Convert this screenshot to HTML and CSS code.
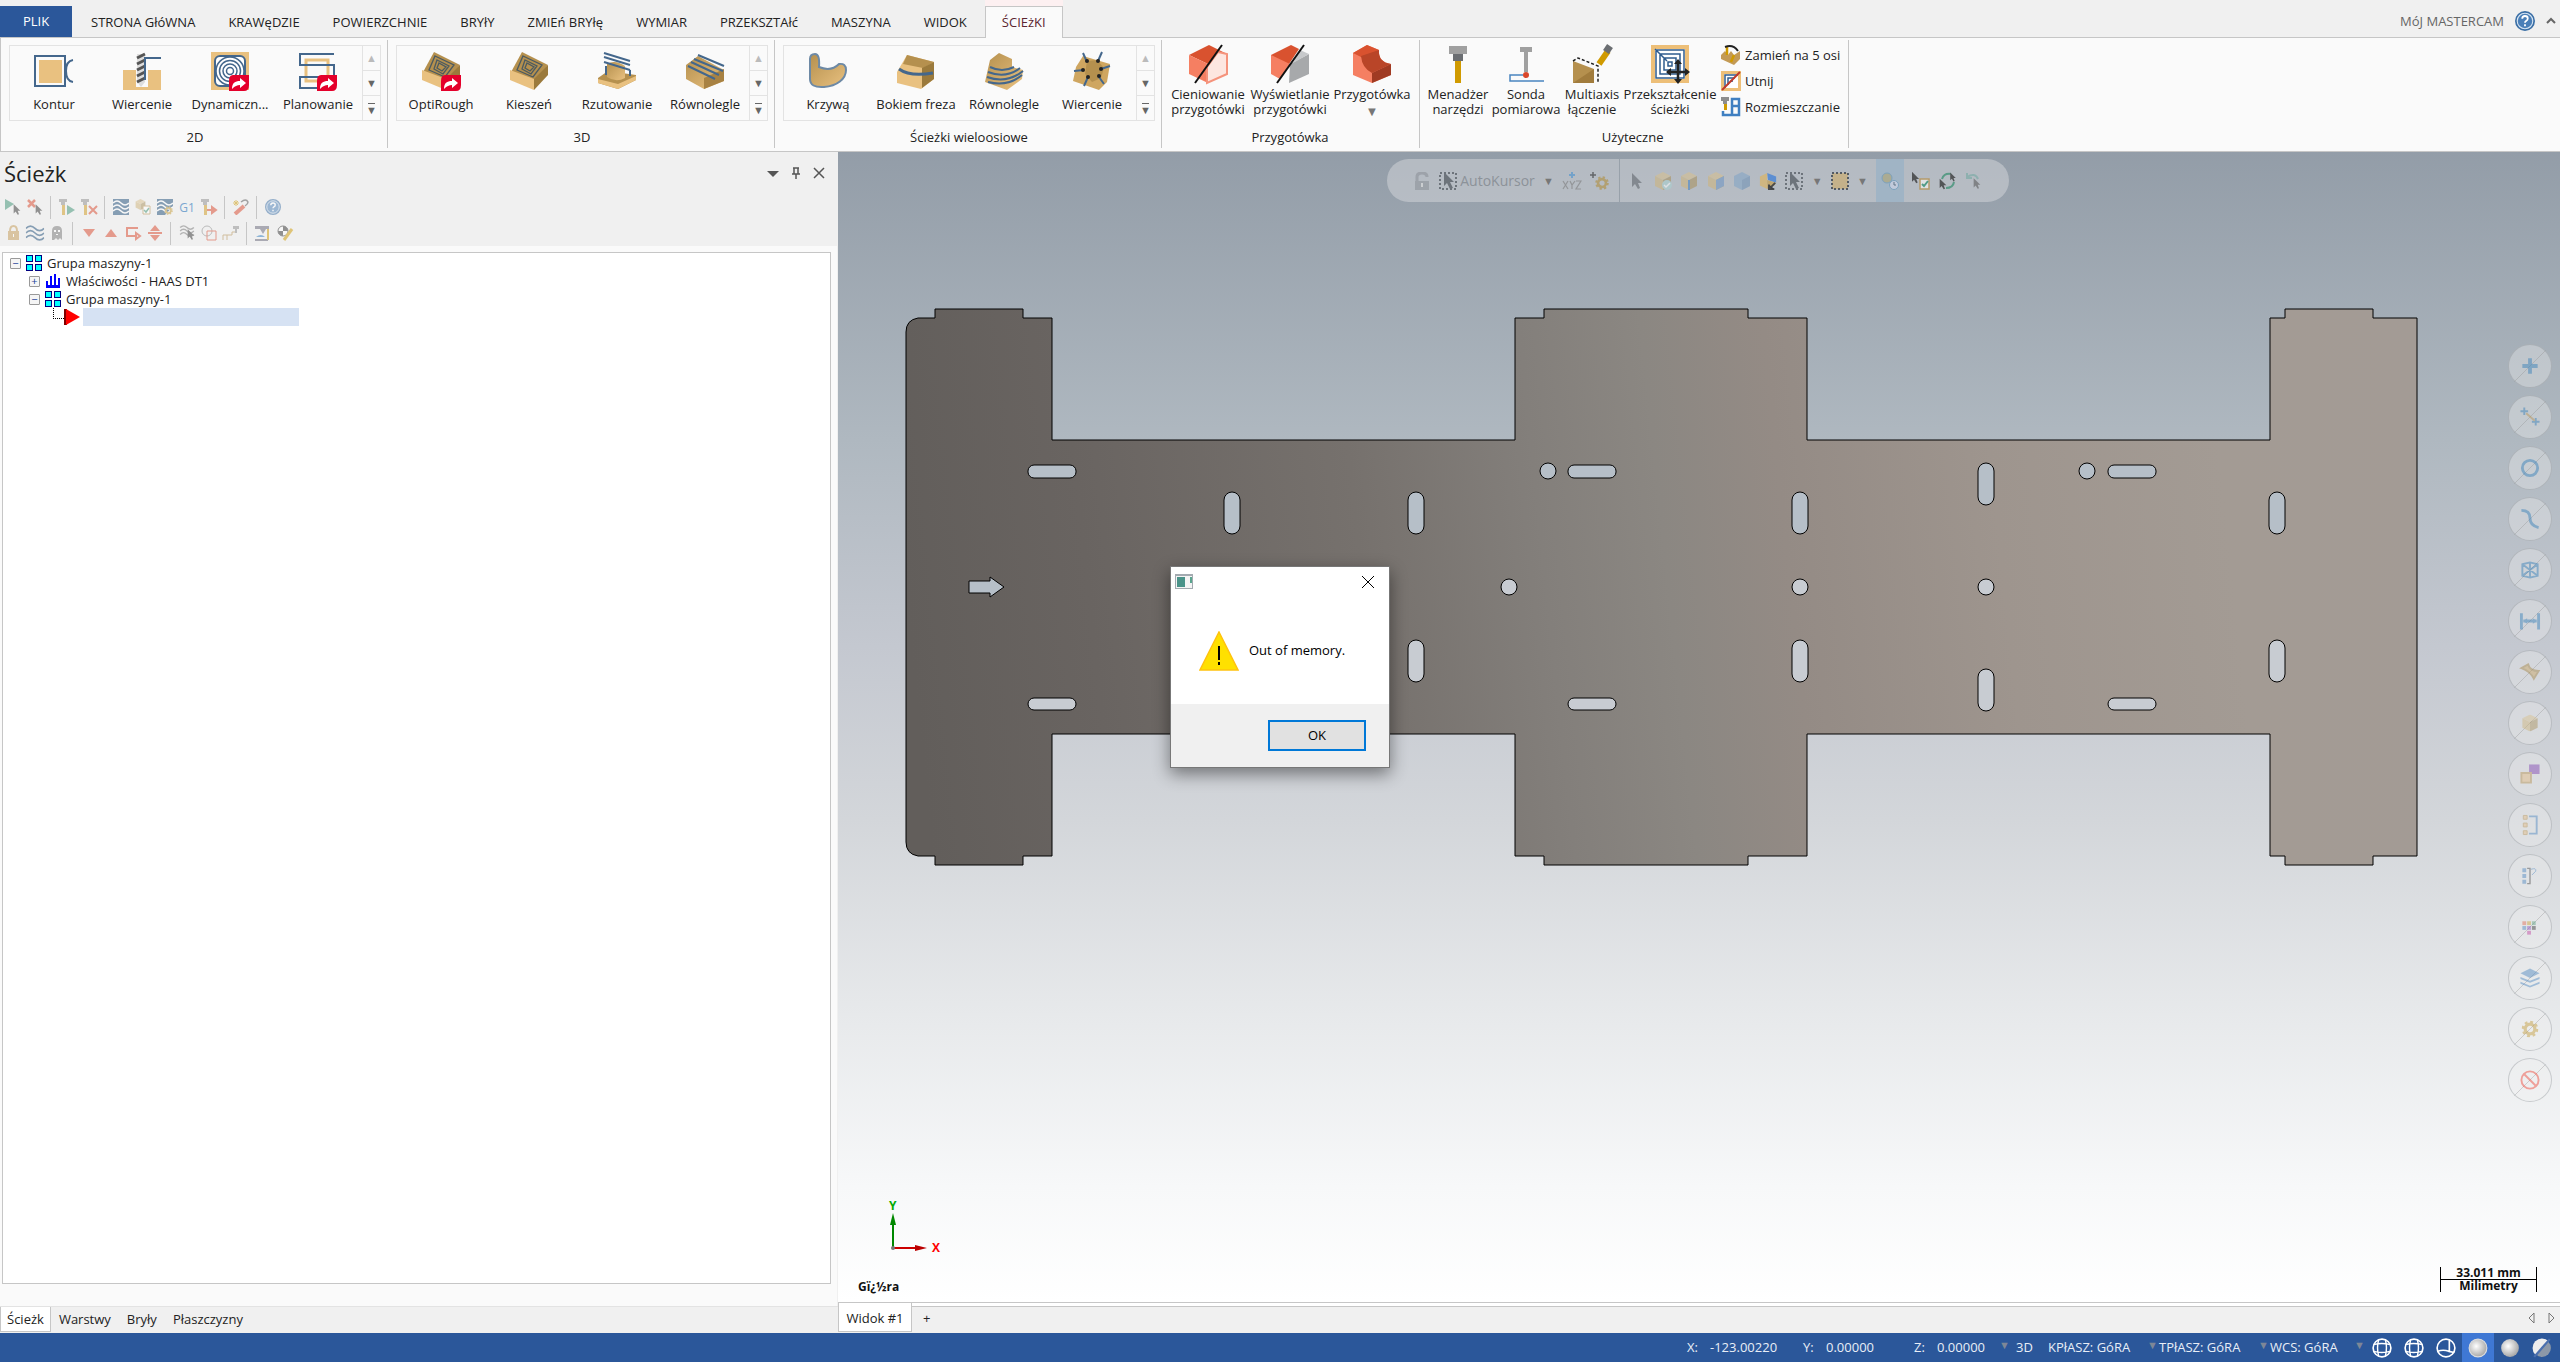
FILE: index.html
```html
<!DOCTYPE html>
<html lang="pl">
<head>
    <meta charset="UTF-8">
    <meta name="viewport" content="width=device-width, initial-scale=1.0">
    <title>Mastercam</title>
    <link rel="stylesheet" href="styles.css">
</head>
<body>
    <!-- Shared icon shapes -->
    <svg class="defs" aria-hidden="true">
        <defs>
            <linearGradient id="wood" x1="0" y1="0" x2="1" y2="1">
                <stop offset="0" stop-color="#b5904e"/><stop offset="1" stop-color="#e9c180"/>
            </linearGradient>
            <radialGradient id="ball" cx="0.4" cy="0.4" r="0.6">
                <stop offset="0" stop-color="#fff"/><stop offset="1" stop-color="#a9a9a9"/>
            </radialGradient>
        </defs>
        <symbol id="i-badge" viewBox="0 0 20 16">
            <path d="M4 0h16v10q0 6-5 6H0V6q0-6 4-6z" fill="#e4002b"/>
            <path d="M3 14C3 8 6 6 11 6V3l6 5-6 5v-3C8 10 6 11 3 14z" fill="#fff"/>
        </symbol>
        <symbol id="i-cursor" viewBox="0 0 12 18">
            <path d="M1 1v14l3-3 3 5 2-1-2-5h4z" fill="currentColor"/>
        </symbol>
        <symbol id="i-group" viewBox="0 0 16 16">
            <path d="M0 0h16v16H0z" fill="#000080"/><path d="M7 0h2v16H7zM0 7h16v2H0z" fill="#fff"/>
            <path d="M1 1h5v5H1zM10 1h5v5h-5zM1 10h5v5H1zM10 10h5v5h-5z" fill="#0ff"/>
        </symbol>
        <symbol id="i-help" viewBox="0 0 18 18">
            <circle cx="9" cy="9" r="8" fill="#4a7fb8" stroke="#3a6ea5" stroke-width="2"/>
            <circle cx="9" cy="9" r="7" fill="none" stroke="#d6e4f2"/>
            <path d="M6.500 7q0-2.500 2.500-2.500t2.500 2.200q0 1.300-1.500 2.200-1 .6-1 1.600M9 12v1.800" fill="none" stroke="#fff" stroke-width="1.600"/>
        </symbol>
        <symbol id="i-gear" viewBox="0 0 16 16">
            <circle cx="8" cy="8" r="4.500" fill="none" stroke="currentColor" stroke-width="3"/>
            <circle cx="8" cy="8" r="6.500" fill="none" stroke="currentColor" stroke-width="2.500" stroke-dasharray="2.600 2.500"/>
        </symbol>
        <symbol id="i-cube" viewBox="0 0 18 18">
            <path d="M9 0l8 4-8 4-8-4z" fill="#d9c08c"/><path d="M1 4l8 4v10l-8-4z" fill="#cfb47a"/><path d="M17 4L9 8v10l8-4z" fill="#a88f58"/>
        </symbol>
        <symbol id="i-waves" viewBox="0 0 16 14">
            <path d="M0 3q4-4 8 0t8 0M0 7q4-4 8 0t8 0M0 11q4-4 8 0t8 0" fill="none" stroke="currentColor" stroke-width="1.500"/>
        </symbol>
        <symbol id="i-drill" viewBox="0 0 8 16">
            <path d="M0 0h8v3H0zM2 3h4v3H2z" fill="#8d8d8d"/><path d="M3 6h3v10H3z" fill="#d09a1c"/>
        </symbol>
        <symbol id="i-globe" viewBox="0 0 18 18">
            <circle cx="9" cy="9" r="8" fill="none" stroke="#fff" stroke-width="1.500"/>
            <path d="M6 1.500q-2 7 0 15M12 1.500q2 7 0 15M1.500 6q7-2 15 0M1.500 12q7 2 15 0" fill="none" stroke="#fff" stroke-width="1.300"/>
        </symbol>
        <symbol id="i-select" viewBox="0 0 18 18">
            <path d="M1 1h16v16H1z" fill="none" stroke="#333a42" stroke-width="2" stroke-dasharray="2 2"/>
            <path d="M5 0v14l3-3 3 6 3-1-3-6h4z" fill="#333a42"/>
        </symbol>
    </svg>

    <nav class="tabs">
        <button class="tab file">PLIK</button>
        <button class="tab">STRONA GłóWNA</button>
        <button class="tab">KRAWęDZIE</button>
        <button class="tab">POWIERZCHNIE</button>
        <button class="tab">BRYłY</button>
        <button class="tab">ZMIEń BRYłę</button>
        <button class="tab">WYMIAR</button>
        <button class="tab">PRZEKSZTAłć</button>
        <button class="tab">MASZYNA</button>
        <button class="tab">WIDOK</button>
        <button class="tab active">ŚCIEżKI</button>
        <div class="account">
            <a href="#">MóJ MASTERCAM</a>
            <svg class="i20"><use href="#i-help"/></svg>
            <svg class="i10" viewBox="0 0 10 10"><path d="M1 7l4-4 4 4" fill="none" stroke="#666" stroke-width="2"/></svg>
        </div>
    </nav>

    <header class="ribbon">
        <section class="group">
            <div class="gallery">
                <button class="tool">
                    <svg class="i38" viewBox="0 0 38 38"><path d="M4 8h23v23H4z" fill="#e9c180"/><path d="M0 4h30v30H0zM38 8q-7 1-7 11t7 11" fill="none" stroke="#44678c" stroke-width="2"/></svg>
                    <span>Kontur</span>
                </button>
                <button class="tool">
                    <svg class="i38" viewBox="0 0 38 38"><path d="M0 18h13v17h12V18h13v20H0z" fill="#e9c180"/><path d="M14 2h8v28l-4 5-4-5z" fill="#ddd"/><path d="M14 6l8-4M14 12l8-4M14 18l8-4M14 24l8-4M14 30l8-4" stroke="#555" stroke-width="3"/><path d="M22 28V6h16" fill="none" stroke="#44678c" stroke-width="2"/></svg>
                    <span>Wiercenie</span>
                </button>
                <button class="tool">
                    <svg class="i38" viewBox="0 0 38 38"><path d="M0 0h38v38H0z" fill="#e9c180"/><rect x="4" y="4" width="30" height="30" rx="5" fill="#fff" stroke="#44678c" stroke-width="2"/><g fill="none" stroke="#44678c" stroke-width="1.500"><circle cx="19" cy="19" r="14"/><circle cx="19" cy="19" r="10.500"/><circle cx="19" cy="19" r="7"/><circle cx="19" cy="19" r="3.500"/></g><use href="#i-badge" x="18" y="23" width="20" height="16"/></svg>
                    <span>Dynamiczn...</span>
                </button>
                <button class="tool">
                    <svg class="i38" viewBox="0 0 38 38"><path d="M7 8h22v21H7z" fill="none" stroke="#e9c180" stroke-width="3"/><path d="M35 2H1v11h34v12H1v11h20" fill="none" stroke="#44678c" stroke-width="2"/><use href="#i-badge" x="18" y="23" width="20" height="16"/></svg>
                    <span>Planowanie</span>
                </button>
                <div class="scroll">
                    <button class="off">▲</button><button>▼</button><button class="more">▼</button>
                </div>
            </div>
            <h2>2D</h2>
        </section>

        <section class="group">
            <div class="gallery">
                <button class="tool">
                    <svg class="i38" viewBox="0 0 38 38"><path d="M12 0l26 13-13 18L0 22z" fill="#b5904e"/><path d="M0 18l24 9v11L0 28z" fill="#e9c180"/><path d="M38 13v10L24 38V27z" fill="#9b7a3c"/><path d="M13 4l19 9-9 12-16-7zM15 8l12 6-6 8-9-5zM17 11l7 4-4 4-5-3z" fill="none" stroke="#4b5a60" stroke-width="1.300"/><use href="#i-badge" x="19" y="23" width="20" height="16"/></svg>
                    <span>OptiRough</span>
                </button>
                <button class="tool">
                    <svg class="i38" viewBox="0 0 38 38"><path d="M12 0l26 13-13 18L0 22z" fill="#b5904e"/><path d="M0 18l24 9v11L0 28z" fill="#e9c180"/><path d="M38 13v10L24 38V27z" fill="#9b7a3c"/><path d="M13 4l19 9-9 12-16-7zM15 8l12 6-6 8-9-5zM17 11l7 4-4 4-5-3z" fill="none" stroke="#4b5a60" stroke-width="1.300"/></svg>
                    <span>Kieszeń</span>
                </button>
                <button class="tool">
                    <svg class="i38" viewBox="0 0 38 38"><path d="M0 26l10-7 28 4v5L20 37 0 31z" fill="#b5904e"/><path d="M0 27l20 5 18-8v4L20 37 0 31z" fill="#e9c180"/><path d="M9 12q8-5 18 2v12q-9 5-18-1z" fill="url(#wood)"/><path d="M6 1l26 8M6 5l26 8M6 10l26 8M8 14v9M32 18v6" stroke="#44678c" stroke-width="2" fill="none"/></svg>
                    <span>Rzutowanie</span>
                </button>
                <button class="tool">
                    <svg class="i38" viewBox="0 0 38 38"><path d="M0 13L12 4l26 14v11L18 37 0 27z" fill="url(#wood)"/><path d="M18 26l20-9v12l-20 8z" fill="#a88243"/><path d="M12 3l26 11M8 7l29 12M5 10l28 13M2 14l27 13" stroke="#44678c" stroke-width="2"/></svg>
                    <span>Równolegle</span>
                </button>
                <div class="scroll">
                    <button class="off">▲</button><button>▼</button><button class="more">▼</button>
                </div>
            </div>
            <h2>3D</h2>
        </section>

        <section class="group">
            <div class="gallery">
                <button class="tool">
                    <svg class="i38" viewBox="0 0 38 38"><path d="M1 7Q1 2 6 2t4 13q12 5 20-3 7-1 7 6c0 9-9 16-22 17Q1 36 1 27z" fill="url(#wood)" stroke="#6d89a5" stroke-width="2"/></svg>
                    <span>Krzywą</span>
                </button>
                <button class="tool">
                    <svg class="i38" viewBox="0 0 38 38"><path d="M0 20L10 3l27 7v17L24 37 0 31z" fill="#e9c180"/><path d="M10 3l27 7-11 6-20-4z" fill="#b5904e"/><path d="M37 10v17L25 36V16z" fill="#9b7a3c"/><path d="M2 17q11 8 34 4" fill="none" stroke="#44678c" stroke-width="3"/></svg>
                    <span>Bokiem freza</span>
                </button>
                <button class="tool">
                    <svg class="i38" viewBox="0 0 38 38"><path d="M5 8l9-7 13 6v8l11 3-1 9-15 11L0 30z" fill="url(#wood)"/><path d="M5 15q12 6 24 0M3 20q18 7 32-4M2 25q20 7 36-6M3 30q20 5 34-7" fill="none" stroke="#44678c" stroke-width="2"/></svg>
                    <span>Równolegle</span>
                </button>
                <button class="tool">
                    <svg class="i38" viewBox="0 0 38 38"><path d="M10 4l27 8-3 18-8 8-26-9 3-14z" fill="#cfa660"/><path d="M14 9l10-1 7 8-3 10-9 4-7-8z" fill="#b5904e"/><path d="M10 1l4 9M29 0l-4 9M1 19l10-1M28 17l9-3M11 34l4-9M31 32l-5-7" stroke="#44678c" stroke-width="2"/><g fill="#222"><circle cx="14" cy="9" r="2"/><circle cx="25" cy="9" r="2"/><circle cx="10" cy="18" r="2"/><circle cx="28" cy="17" r="2"/><circle cx="15" cy="25" r="2"/><circle cx="26" cy="24" r="2"/></g></svg>
                    <span>Wiercenie</span>
                </button>
                <div class="scroll">
                    <button class="off">▲</button><button>▼</button><button class="more">▼</button>
                </div>
            </div>
            <h2>Ścieżki wieloosiowe</h2>
        </section>

        <section class="group stock">
            <div class="buttons">
                <button class="tool">
                    <svg class="i38" viewBox="0 0 38 38"><path d="M0 10L20 0l18 9-19 10z" fill="#d9522f"/><path d="M0 10l19 9v19L0 29z" fill="#f57f62"/><path d="M29 7l9 2v20l-20 9V22z" fill="#fde6e0" stroke="#f5937c" stroke-width="2"/><path d="M33 0L6 38" stroke="#111" stroke-width="2"/></svg>
                    <span>Cieniowanie<br>przygotówki</span>
                </button>
                <button class="tool">
                    <svg class="i38" viewBox="0 0 38 38"><path d="M0 10L20 0l8 4-12 18-16-8z" fill="#d9522f"/><path d="M0 10l19 9-10 15-9-5z" fill="#f57f62"/><path d="M19 19l19-10v20l-20 9z" fill="#a7a9ab"/><path d="M29 5l9 4-16 9z" fill="#c7c9cb"/><path d="M33 0L6 38" stroke="#111" stroke-width="2"/></svg>
                    <span>Wyświetlanie<br>przygotówki</span>
                </button>
                <button class="tool">
                    <svg class="i38" viewBox="0 0 38 38"><path d="M0 8L14 0l12 5q-1 12 12 14v11l-19 8L0 30z" fill="#f57f62"/><path d="M0 8L14 0l12 5-14 9z" fill="#d9522f"/><path d="M26 5q-1 12 12 14l-19 9q-10-5-11-17z" fill="#b94528"/><path d="M38 19v11l-19 8V28z" fill="#a03a22"/></svg>
                    <span>Przygotówka</span><i>▼</i>
                </button>
            </div>
            <h2>Przygotówka</h2>
        </section>

        <section class="group utility">
            <div class="buttons">
                <button class="tool">
                    <svg class="i38" viewBox="0 0 38 38"><path d="M10 1h18v8H10z" fill="#a0a0a0"/><path d="M14 9h10v7H14z" fill="#6b6e72"/><path d="M16 16h6v22h-6z" fill="#d09a00"/></svg>
                    <span>Menadżer<br>narzędzi</span>
                </button>
                <button class="tool">
                    <svg class="i38" viewBox="0 0 38 38"><path d="M13 2h12v5h-4v20h-4V7h-4z" fill="#a0a0a0"/><path d="M16 30H3v6h34" fill="none" stroke="#4a85c0" stroke-width="1.500"/><circle cx="19" cy="30" r="3" fill="#d9472b"/></svg>
                    <span>Sonda<br>pomiarowa</span>
                </button>
                <button class="tool">
                    <svg class="i38" viewBox="0 0 38 38"><path d="M0 16l21 8v14H0z" fill="#b5904e"/><path d="M0 38l21-14v14z" fill="#a17c3d"/><path d="M0 16l5-3 20 8v17" fill="none" stroke="#222" stroke-width="1.500" stroke-dasharray="3 2"/><path d="M26 19l9-13" stroke="#d09a00" stroke-width="6"/><path d="M33 7l4-6" stroke="#6b6e72" stroke-width="7"/></svg>
                    <span>Multiaxis<br>łączenie</span>
                </button>
                <button class="tool">
                    <svg class="i38" viewBox="0 0 38 38"><path d="M0 0h38v38H0z" fill="#edbf78"/><path d="M4 4h30v30H4z" fill="#fff"/><path d="M5 5h28v28H5zM9 9h20v20H9zM13 13h12v12H13zM17 17h4v4h-4zM4 4l12 12" fill="none" stroke="#2f5c8f" stroke-width="1.500"/><path d="M27 16v21M16 27h21" stroke="#222" stroke-width="2.500"/><path d="M27 14l4 5h-8zM27 39l4-5h-8zM15 27l5-4v8zM39 27l-5-4v8z" fill="#222"/></svg>
                    <span>Przekształcenie<br>ścieżki</span>
                </button>
                <div class="stack">
                    <button><svg class="i20" viewBox="0 0 20 20"><path d="M0 10l4-4 3 4 3-4 3 4 6-4v8L13 20 0 14z" fill="#c39a55"/><path d="M6 2v8M13 10l-3 7" stroke="#d09a00" stroke-width="2.500"/><path d="M4 2q8-3 13 4" fill="none" stroke="#222" stroke-width="2"/></svg>Zamień na 5 osi</button>
                    <button><svg class="i20" viewBox="0 0 20 20"><path d="M0 0h20v20H0z" fill="#edbf78"/><path d="M3 3h14v14H3z" fill="#fff"/><path d="M4 17V4h13M7 14V7h7M10 11v-1h2" fill="none" stroke="#2f5c8f" stroke-width="1.500"/><path d="M1 19L19 1" stroke="#c0392b" stroke-width="2"/></svg>Utnij</button>
                    <button><svg class="i20" viewBox="0 0 20 20"><path d="M0 0h8v4H0zM2 4h4v3H2z" fill="#8d8d8d"/><path d="M3 7h3v6H3z" fill="#d09a00"/><path d="M2 14v4h16V2h-7v15M11 9h7" fill="none" stroke="#3f7fc1" stroke-width="2.500"/></svg>Rozmieszczanie</button>
                </div>
            </div>
            <h2>Użyteczne</h2>
        </section>
    </header>

    <main>
        <aside class="panel">
            <div class="title">
                <h1>Ścieżk</h1>
                <svg class="i12" viewBox="0 0 12 12"><path d="M0 4h12L6 10z" fill="#555"/></svg>
                <svg class="i12" viewBox="0 0 12 12"><path d="M3 1h6M4 1v6M8 1v6M2 7h8M6 7v5" fill="none" stroke="#555" stroke-width="1.500"/></svg>
                <svg class="i12" viewBox="0 0 12 12"><path d="M1 1l10 10M11 1L1 11" stroke="#555" stroke-width="1.500"/></svg>
            </div>

            <div class="bar">
                <svg viewBox="0 0 16 16"><path d="M0 0l9 5-9 6z" fill="#3c9173"/><use href="#i-cursor" x="8" y="4" width="8" height="13" color="#333"/></svg>
                <svg viewBox="0 0 16 16"><path d="M1 1l7 7M8 1L1 8" stroke="#d9472b" stroke-width="2.500"/><use href="#i-cursor" x="8" y="4" width="8" height="13" color="#333"/></svg>
                <hr>
                <svg viewBox="0 0 16 16"><use href="#i-drill" width="8" height="16"/><path d="M8 6l8 5-8 5z" fill="#3c9173"/></svg>
                <svg viewBox="0 0 16 16"><use href="#i-drill" width="8" height="16"/><path d="M8 7l8 8M16 7l-8 8" stroke="#d9472b" stroke-width="2"/></svg>
                <hr>
                <svg viewBox="0 0 16 16"><path d="M0 0h16v16H0z" fill="#1f4e79"/><use href="#i-waves" y="1" width="16" height="14" color="#fff"/></svg>
                <svg viewBox="0 0 16 16"><use href="#i-cube" width="11" height="11"/><path d="M8 7h7v8H8z" fill="#fff" stroke="#b5904e"/><path d="M9 11l2 2 3-4" fill="none" stroke="#3c9173" stroke-width="1.500"/></svg>
                <svg viewBox="0 0 16 16"><path d="M0 0h16v7L8 16H0z" fill="#1f4e79"/><use href="#i-waves" y="1" width="16" height="14" color="#fff"/><use href="#i-gear" x="7" y="7" width="9" height="9" color="#c39a35"/></svg>
                <b>G1</b>
                <svg viewBox="0 0 16 16"><use href="#i-drill" width="8" height="16"/><path d="M6 11h6M11 8l4 3-4 3z" stroke="#d9472b" stroke-width="2" fill="#d9472b"/></svg>
                <hr>
                <svg viewBox="0 0 16 16"><path d="M2 15l9-8" stroke="#d9472b" stroke-width="4"/><path d="M8 3q5-4 7 0 0 2-3 4" fill="none" stroke="#555" stroke-width="1.500"/><path d="M3 1v6M0 4h6M1 2l4 4M5 2L1 6" stroke="#d09a00"/></svg>
                <hr>
                <svg viewBox="0 0 18 18"><use href="#i-help"/></svg>
            </div>
            <div class="bar">
                <svg viewBox="0 0 16 16"><path d="M3 6h11v9H3z" fill="#c39a55"/><path d="M5 6q0-5 3.500-5T12 6" fill="none" stroke="#c39a55" stroke-width="2"/><path d="M8 9h1v3H8z" fill="#fff"/></svg>
                <svg viewBox="0 0 16 14"><use href="#i-waves" color="#1f4e79"/></svg>
                <svg viewBox="0 0 16 16"><path d="M3 15V6q0-5 5-5t5 5v9l-2-2-2 2-2-2-2 2z" fill="#777"/><path d="M5 5h2v2H5zM9 5h2v2H9zM7 9h2v1H7z" fill="#fff"/></svg>
                <hr>
                <svg viewBox="0 0 16 16"><path d="M2 4h12l-6 8z" fill="#d9472b"/></svg>
                <svg viewBox="0 0 16 16"><path d="M2 12h12L8 4z" fill="#d9472b"/></svg>
                <svg viewBox="0 0 16 16"><path d="M13 3H2v8h10M11 8l4 3-4 3z" fill="none" stroke="#d9472b" stroke-width="2"/></svg>
                <svg viewBox="0 0 16 16"><path d="M1 7h14v2H1zM3 6h10L8 0zM3 10h10l-5 6z" fill="#d9472b"/></svg>
                <hr>
                <svg viewBox="0 0 16 16"><use href="#i-waves" width="16" height="12" color="#777"/><use href="#i-cursor" x="8" y="3" width="8" height="13" color="#333"/></svg>
                <svg viewBox="0 0 16 16"><circle cx="6" cy="6" r="5" fill="none" stroke="#888"/><path d="M6 6h9v9H6z" fill="none" stroke="#d9472b"/></svg>
                <svg viewBox="0 0 16 16"><path d="M0 15V10h9V7h5M4 10v5" fill="none" stroke="#b5904e"/><path d="M10 1h6v3h-2v4h-2V4h-2z" fill="#8d8d8d"/></svg>
                <hr>
                <svg viewBox="0 0 16 16"><path d="M0 1h14v3h-3l-3 5-3-5H0z" fill="#667"/><path d="M0 14h13v2H0z" fill="#667"/><path d="M1 12q5-4 9 0z" fill="#2f7cc0"/><path d="M13 4v11" stroke="#d09a00" stroke-width="2"/></svg>
                <svg viewBox="0 0 16 16"><circle cx="6" cy="6" r="5" fill="#fff" stroke="#333"/><path d="M6 1a5 5 0 0 1 5 5H6zM6 11a5 5 0 0 1-5-5h5z" fill="#333"/><path d="M7 15l8-11" stroke="#d09a00" stroke-width="3"/></svg>
            </div>

            <ul class="tree">
                <li><span class="box">−</span><svg class="i16"><use href="#i-group"/></svg>Grupa maszyny-1</li>
                <li class="lvl2"><span class="box">+</span><svg class="i16" viewBox="0 0 16 16"><path d="M1 15V8h2v4h2V3h2v9h2V1h2v11h2V5h2v10z" fill="#00f"/></svg>Właściwości - HAAS DT1</li>
                <li class="lvl2"><span class="box">−</span><svg class="i16"><use href="#i-group"/></svg>Grupa maszyny-1</li>
                <li class="lvl3"><span class="elbow"></span><svg class="i16" viewBox="0 0 16 16"><path d="M0 0h3v16H0z" fill="#800000"/><path d="M2 0l14 8-14 8z" fill="red"/></svg><span class="selected"></span></li>
            </ul>

            <div class="panel-tabs">
                <button class="active">Ścieżk</button>
                <button>Warstwy</button>
                <button>Bryły</button>
                <button>Płaszczyzny</button>
            </div>
        </aside>

        <section class="view">
            <div class="canvas">
                <svg class="model" viewBox="838 152 1722 1150" preserveAspectRatio="xMinYMin meet">
                    <defs>
                        <linearGradient id="metal" gradientUnits="userSpaceOnUse" x1="906" y1="600" x2="2417" y2="440">
                            <stop offset="0" stop-color="#625e5b"/>
                            <stop offset="0.12" stop-color="#696461"/>
                            <stop offset="0.3" stop-color="#76716d"/>
                            <stop offset="0.42" stop-color="#837f7b"/>
                            <stop offset="0.5" stop-color="#8b8782"/>
                            <stop offset="0.58" stop-color="#948b85"/>
                            <stop offset="0.72" stop-color="#9e958e"/>
                            <stop offset="0.87" stop-color="#a39b94"/>
                            <stop offset="1" stop-color="#a39b95"/>
                        </linearGradient>
                    </defs>
                    <path class="plate" fill="url(#metal)" d="M918 318H935V309H1023V318H1052V440H1515V318H1544V309H1748V318H1807V440H2270V318H2285V309H2373V318H2417V856H2373V865H2285V856H2270V734H1807V856H1748V865H1544V856H1515V734H1052V856H1023V865H935V856H918Q906 854 906 842V332Q906 320 918 318Z"/>
                    <g class="holes">
                        <path d="M969 581h21v-4l14 10-14 10v-4h-21z"/>
                        <rect x="1028" y="465" width="48" height="13" rx="6"/>
                        <rect x="1568" y="465" width="48" height="13" rx="6"/>
                        <rect x="2108" y="465" width="48" height="13" rx="6"/>
                        <rect x="1224" y="492" width="16" height="42" rx="8"/>
                        <rect x="1408" y="492" width="16" height="42" rx="8"/>
                        <rect x="1792" y="492" width="16" height="42" rx="8"/>
                        <rect x="2269" y="492" width="16" height="42" rx="8"/>
                        <rect x="1978" y="463" width="16" height="42" rx="8"/>
                        <circle cx="1548" cy="471" r="8"/>
                        <circle cx="2087" cy="471" r="8"/>
                    </g>
                    <g class="holes low">
                        <rect x="1028" y="698" width="48" height="12" rx="6"/>
                        <rect x="1568" y="698" width="48" height="12" rx="6"/>
                        <rect x="2108" y="698" width="48" height="12" rx="6"/>
                        <rect x="1408" y="640" width="16" height="42" rx="8"/>
                        <rect x="1792" y="640" width="16" height="42" rx="8"/>
                        <rect x="2269" y="640" width="16" height="42" rx="8"/>
                        <rect x="1978" y="669" width="16" height="42" rx="8"/>
                        <circle cx="1509" cy="587" r="8"/>
                        <circle cx="1800" cy="587" r="8"/>
                        <circle cx="1986" cy="587" r="8"/>
                    </g>
                </svg>

                <div class="quick">
                    <svg viewBox="0 0 18 18"><path d="M2 9h14v9H2z" fill="#8a8f96"/><path d="M4 9V5q0-4 5-4t5 4" fill="none" stroke="#8a8f96" stroke-width="3"/><path d="M8 11h2v4H8z" fill="#ddd"/></svg>
                    <button class="auto"><svg viewBox="0 0 18 18"><use href="#i-select"/></svg>AutoKursor</button>
                    <i>▼</i>
                    <svg class="wide" viewBox="0 0 20 18"><path d="M10 0v6M7 3h6" stroke="#3f8fd0" stroke-width="2"/><path d="M1 9l5 8M6 9l-5 8M8 9l2 4 3-4M10 13v4M14 9h5l-5 8h5" fill="none" stroke="#777" stroke-width="1.200"/></svg>
                    <svg class="wide" viewBox="0 0 20 18"><path d="M3 0v6M0 3h6" stroke="#222" stroke-width="1.500"/><use href="#i-gear" x="5" y="4" width="14" height="14" color="#b08a30"/></svg>
                    <hr>
                    <svg viewBox="0 0 12 18"><use href="#i-cursor" color="#5b6067"/></svg>
                    <svg viewBox="0 0 18 18"><use href="#i-cube"/><circle cx="13" cy="13" r="5" fill="#a9d0d0"/><path d="M10 13l2 2 4-4" fill="none" stroke="#fff" stroke-width="1.500"/></svg>
                    <svg viewBox="0 0 18 18"><use href="#i-cube"/><path d="M9 8v10" stroke="#3f7fc1" stroke-width="2"/></svg>
                    <svg viewBox="0 0 18 18"><use href="#i-cube"/><path d="M17 4L9 8v10l8-4z" fill="#6a94c4"/></svg>
                    <svg viewBox="0 0 18 18"><path d="M9 0l8 4v10l-8 4-8-4V4z" fill="#7fa3c6"/><path d="M9 8l8-4v10l-8 4z" fill="#6a8fb6"/></svg>
                    <svg class="strong" viewBox="0 0 20 18"><path d="M9 0l10 4v7l-9-3z" fill="#3f7fd8"/><path d="M9 0v18l-8-4V4z" fill="#d8b56c"/><path d="M9 8l10 3-2 3-8 4z" fill="#c4a055"/><path d="M18 11l-7 7M11 13v5h6" stroke="#222" stroke-width="2"/></svg>
                    <svg viewBox="0 0 18 18"><use href="#i-select"/></svg>
                    <i>▼</i>
                    <svg class="strong" viewBox="0 0 18 18"><path d="M1 1h16v16H1z" fill="#c9ae78" stroke="#333a42" stroke-width="2" stroke-dasharray="2 2"/></svg>
                    <i>▼</i>
                    <span class="on"><svg viewBox="0 0 18 18"><circle cx="6" cy="6" r="5" fill="#b5a56a" stroke="#5f93b8"/><circle cx="13" cy="13" r="4.500" fill="#dde" stroke="#5f93b8"/><path d="M13 10v3h2" fill="none" stroke="#345"/></svg></span>
                    <svg class="strong" viewBox="0 0 18 18"><use href="#i-cursor" x="-1" y="-1" width="9" height="13" color="#333"/><path d="M8 7h9v10H8z" fill="#eee" stroke="#b5904e" stroke-width="1.500"/><path d="M10 12l2 2 4-5" fill="none" stroke="#2f9173" stroke-width="2"/></svg>
                    <svg class="strong" viewBox="0 0 18 18"><path d="M3 7q2-6 9-5M15 10q-1 6-8 6" fill="none" stroke="#3c9173" stroke-width="2"/><use href="#i-cursor" y="6" width="8" height="12" color="#333"/><use href="#i-cursor" x="10" width="8" height="10" color="#333"/></svg>
                    <svg viewBox="0 0 18 18"><path d="M2 5q8-5 11 2M2 1v5h5" fill="none" stroke="#6fa8a0" stroke-width="2"/><use href="#i-cursor" x="8" y="5" width="8" height="13" color="#555"/></svg>
                </div>

                <div class="side">
                    <button><svg viewBox="0 0 44 44"><path d="M22 14v16M14 22h16" stroke="#2f7cb8" stroke-width="4"/></svg></button>
                    <button><svg viewBox="0 0 44 44"><path d="M16 12v8M12 16h8M28 23v8M24 27h8" stroke="#2f7cb8" stroke-width="2"/><path d="M18 18l9 8" stroke="#b5904e" stroke-width="2"/></svg></button>
                    <button><svg viewBox="0 0 44 44"><circle cx="22" cy="22" r="8" fill="none" stroke="#2f7cb8" stroke-width="3"/></svg></button>
                    <button><svg viewBox="0 0 44 44"><path d="M13 13q9 0 9 8t9 10" fill="none" stroke="#2f7cb8" stroke-width="3"/></svg></button>
                    <button><svg viewBox="0 0 44 44"><path d="M14 16l8-2 8 2v12l-8 2-8-2zM22 14v16M14 16l16 12M30 16L14 28" fill="none" stroke="#2f7cb8" stroke-width="2"/></svg></button>
                    <button><svg viewBox="0 0 44 44"><path d="M13 14v17M31 14v17M15 22h14" stroke="#2f7cb8" stroke-width="3"/><path d="M15 22l4-3v6zM29 22l-4-3v6z" fill="#2f7cb8"/></svg></button>
                    <button><svg viewBox="0 0 44 44"><path d="M13 18l7-4q2 7 11 7l-5 8q-4-8-13-11z" fill="#c8a460" stroke="#a38442" stroke-width="2"/></svg></button>
                    <button><svg viewBox="0 0 44 44"><use href="#i-cube" x="13" y="13" width="18" height="18"/></svg></button>
                    <button class="plain"><svg viewBox="0 0 44 44"><path d="M21 12h11v10H21z" fill="#7d3fb0"/><path d="M13 21h10v10H13z" fill="#e2b981" stroke="#b5904e" stroke-width="2"/></svg></button>
                    <button class="plain"><svg viewBox="0 0 44 44"><path d="M15 12h4v4h-4zM15 20h4v4h-4zM15 28h4v4h-4z" fill="#e2b981" stroke="#b5904e"/><path d="M21 13h8v18h-8" fill="none" stroke="#4a85c0" stroke-width="2"/></svg></button>
                    <button class="plain"><svg viewBox="0 0 44 44"><path d="M14 14h4v4h-4zM14 20h4v4h-4zM14 26h4v4h-4z" fill="#4a85c0"/><path d="M19 14h3v16h-3" fill="none" stroke="#444" stroke-width="1.500"/><path d="M23 15q6-2 5 2l-4 4" fill="none" stroke="#4a85c0"/></svg></button>
                    <button><svg viewBox="0 0 44 44"><path d="M14 16h4v4h-4z" fill="#e06a50"/><path d="M19 16h4v4h-4z" fill="#c8a030"/><path d="M24 16h4v4h-4z" fill="#5aa080"/><path d="M14 21h4v4h-4z" fill="#4a85c0"/><path d="M19 21h4v4h-4z" fill="#8a50c0"/><path d="M24 21h4v4h-4z" fill="#333"/><path d="M19 26h4v4h-4z" fill="#c040a0"/></svg></button>
                    <button><svg viewBox="0 0 44 44"><path d="M22 12l10 5-10 5-10-5zM12 21l10 4 10-4v2l-10 4-10-4zM12 26l10 4 10-4v2l-10 4-10-4z" fill="#4a85c0"/></svg></button>
                    <button><svg viewBox="0 0 44 44"><use href="#i-gear" x="13" y="13" width="18" height="18" color="#c39a35"/></svg></button>
                    <button><svg viewBox="0 0 44 44"><circle cx="22" cy="22" r="9" fill="none" stroke="#f04030" stroke-width="2"/><path d="M16 16l12 12" stroke="#f04030" stroke-width="2"/></svg></button>
                </div>

                <div class="axes">
                    <svg viewBox="0 0 60 64"><path d="M15 52V24" stroke="#080" stroke-width="2"/><path d="M15 17l3 12h-6z" fill="#080"/><path d="M15 52h24" stroke="#c00" stroke-width="2"/><path d="M49 52l-12 3v-6z" fill="#b00"/><circle cx="15" cy="52" r="2" fill="#777"/></svg>
                    <span class="y">Y</span><span class="x">X</span>
                </div>
                <strong class="plane">Gï¿½ra</strong>
                <div class="ruler"><span>33.011 mm</span><span>Milimetry</span></div>
            </div>

            <div class="view-tabs">
                <button class="active">Widok #1</button>
                <button>+</button>
                <svg class="arrows" viewBox="0 0 28 12"><path d="M6 1L1 6l5 5zM21 1l5 5-5 5z" fill="none" stroke="#777"/></svg>
            </div>
        </section>
    </main>

    <footer class="status">
        <span class="key">X:</span><span class="num">-123.00220</span>
        <span class="key">Y:</span><span class="num y">0.00000</span>
        <span class="key">Z:</span><span class="num z">0.00000</span><i>▼</i>
        <span class="mode">3D</span>
        <button>KPłASZ: GóRA</button><i>▼</i>
        <button>TPłASZ: GóRA</button><i>▼</i>
        <button>WCS: GóRA</button><i>▼</i>
        <div class="shading">
            <button><svg class="i20"><use href="#i-globe"/></svg></button>
            <button><svg class="i20"><use href="#i-globe"/></svg></button>
            <button><svg class="i20" viewBox="0 0 18 18"><circle cx="9" cy="9" r="8" fill="none" stroke="#fff" stroke-width="1.500"/><path d="M12 1.500v10M1.500 12q5-2 10 0l5 1" fill="none" stroke="#fff" stroke-width="1.500"/></svg></button>
            <button class="active"><svg class="i20" viewBox="0 0 18 18"><circle cx="9" cy="9" r="8" fill="url(#ball)" stroke="#ddd"/></svg></button>
            <button><svg class="i20" viewBox="0 0 18 18"><circle cx="9" cy="9" r="8" fill="url(#ball)"/></svg></button>
            <button><svg class="i20" viewBox="0 0 18 18"><circle cx="9" cy="9" r="8" fill="#8c98a8"/><path d="M3 15A8 8 0 0 1 15 3z" fill="#eee"/><path d="M2 17L16 1" stroke="#4a6fae" stroke-width="2"/></svg></button>
        </div>
    </footer>

    <dialog open class="message">
        <div class="caption">
            <svg viewBox="0 0 18 16"><path d="M0 0h18v15H0z" fill="#a3aab0"/><path d="M1 2h16v12H1z" fill="#f4f4f4"/><path d="M2 3h8v10H2z" fill="#4a9389"/><path d="M15 3h2v6h-2z" fill="#5aa58f"/></svg>
            <button aria-label="Zamknij"><svg viewBox="0 0 12 12"><path d="M0 0l12 12M12 0L0 12" stroke="#000"/></svg></button>
        </div>
        <div class="text">
            <svg viewBox="0 0 40 40"><path d="M20 1l19 38H1z" fill="#ffe000" stroke="#ffc20e" stroke-width="1.500"/><path d="M19 15h2v14h-2zM19 31h2v3h-2z" fill="#000"/></svg>
            <p>Out of memory.</p>
        </div>
        <form method="dialog"><button>OK</button></form>
    </dialog>
</body>
</html>
```
FILE: styles.css
```css
* {
    box-sizing: border-box;
}

body {
    margin: 0;
    height: 100vh;
    display: flex;
    flex-direction: column;
    font-family: "Open Sans", "Noto Sans", sans-serif;
    font-size: 13px;
    line-height: 15px;
    color: #222;
    background: #f0f0f0;
    overflow: hidden;
}

button {
    font: inherit;
    color: inherit;
    background: none;
    border: none;
    padding: 0;
    white-space: nowrap;
}

h1, h2, p, ul, hr {
    margin: 0;
    padding: 0;
    font-weight: normal;
}

svg { display: block; flex: none; }
i { font-style: normal; color: #777; }

.defs { position: absolute; width: 0; height: 0; }
.i10 { width: 10px; height: 10px; }
.i12 { width: 12px; height: 12px; }
.i16 { width: 16px; height: 16px; }
.i20 { width: 20px; height: 20px; }
.i38 { width: 38px; height: 38px; overflow: visible; }

/* Ribbon tabs */
.tabs {
    display: flex;
    height: 38px;
    padding-top: 6px;
    border-bottom: 1px solid #c6c6c6;
    flex: none;
}

.tab {
    padding: 0 18px 0 15px;
    height: 32px;
}

.tab.file {
    width: 72px;
    padding: 0;
    margin-right: 4px;
    height: 31px;
    background: #2b579a;
    color: #fff;
}

.tab.active {
    padding: 0 16px;
    background: #fafafa;
    border: 1px solid #c6c6c6;
    border-bottom: none;
    color: #5c2530;
    box-shadow: 0 -6px #fdf0f1;
}

.account {
    display: flex;
    align-items: center;
    gap: 11px;
    margin-left: auto;
    padding-right: 4px;
    height: 30px;
}

.account a {
    color: #666;
    text-decoration: none;
}

/* Ribbon */
.ribbon {
    display: flex;
    height: 114px;
    background: #fafafa;
    border-left: 1px solid #c6c6c6;
    border-bottom: 1px solid #c6c6c6;
    flex: none;
}

.group {
    position: relative;
    padding: 7px 7px 0 8px;
    text-align: center;
}

.group::after {
    content: "";
    position: absolute;
    right: 0;
    top: 2px;
    bottom: 3px;
    border-right: 1px solid #c6c6c6;
}

.group h2 {
    font-size: 13px;
    line-height: 18px;
    margin-top: 7px;
}

.gallery {
    display: flex;
    width: 372px;
    height: 76px;
    border: 1px solid #e3e3e3;
}

.tool {
    flex: 1;
    display: flex;
    flex-direction: column;
    align-items: center;
    padding-top: 6px;
    line-height: 15px;
}

.gallery .tool { width: 88px; gap: 7px; }

.scroll {
    width: 18px;
    display: flex;
    flex-direction: column;
    border-left: 1px solid #e3e3e3;
}

.scroll button {
    flex: 1;
    font-size: 11px;
    line-height: 8px;
    color: #666;
}

.scroll button + button { border-top: 1px solid #e3e3e3; }
.scroll .off { color: #bbb; }

.scroll .more::before {
    content: "";
    display: block;
    width: 7px;
    margin: 0 auto 2px;
    border-top: 1px solid #666;
}

.buttons {
    display: flex;
    height: 76px;
}

.buttons .tool {
    padding-top: 0;
    gap: 4px;
    flex: none;
    width: 82px;
}

.buttons .tool i {
    font-size: 13px;
    line-height: 10px;
}

.stock { padding-left: 5px; }
.utility { padding-left: 5px; padding-right: 9px; }
.utility .tool:nth-child(1) { width: 66px; }
.utility .tool:nth-child(2) { width: 70px; }
.utility .tool:nth-child(3) { width: 62px; }
.utility .tool:nth-child(4) { width: 94px; }

.stack {
    display: flex;
    flex-direction: column;
    gap: 6px;
    margin-left: 4px;
}

.stack button {
    display: flex;
    align-items: center;
    gap: 4px;
    height: 20px;
}

/* Left panel */
main {
    flex: 1;
    display: flex;
    min-height: 0;
}

.panel {
    width: 838px;
    display: flex;
    flex-direction: column;
    flex: none;
}

.title {
    display: flex;
    align-items: center;
    gap: 11px;
    height: 42px;
    padding: 0 13px 0 4px;
}

.title h1 {
    flex: 1;
    font-size: 22px;
    line-height: 30px;
}

.bar {
    display: flex;
    align-items: center;
    height: 26px;
    padding-left: 2px;
}

.bar svg {
    width: 22px;
    height: 16px;
    opacity: 0.500;
}

.bar b {
    width: 22px;
    font-size: 12px;
    font-weight: normal;
    text-align: center;
    color: #7ba7d0;
}

.bar hr {
    height: 23px;
    margin: 0 5px 0 4px;
    border: none;
    border-left: 1px solid #c6c6c6;
}

.tree {
    flex: 1;
    list-style: none;
    background: #fff;
    border: 1px solid #c6c6c6;
    margin: 6px 7px 0 2px;
    padding: 1px 0 0 7px;
    box-shadow: 0 0 0 6px #fafafa, 0 16px 0 6px #fafafa;
    clip-path: inset(-6px -6px -24px -2px);
}

.tree li {
    display: flex;
    align-items: center;
    gap: 5px;
    height: 18px;
}

.tree .lvl2 { padding-left: 19px; }
.tree .lvl3 { padding-left: 43px; gap: 3px; }

.box {
    width: 11px;
    height: 11px;
    border: 1px solid #999;
    border-radius: 1px;
    font-size: 11px;
    line-height: 8px;
    text-align: center;
    color: #249;
    background: #f5f5f5;
}

.elbow {
    width: 11px;
    height: 11px;
    border-left: 1px dotted #000;
    border-bottom: 1px dotted #000;
    margin: -8px -3px 0 0;
}

.selected {
    width: 216px;
    height: 18px;
    background: #d6e2f3;
}

.panel-tabs {
    display: flex;
    height: 27px;
    margin-top: 22px;
    border-top: 1px solid #e3e3e3;
    background: #f0f0f0;
}

.panel-tabs button {
    height: 25px;
    padding: 0 8px;
}

.panel-tabs .active {
    padding: 0 6px;
    background: #fff;
    border: 1px solid #c6c6c6;
    border-top: none;
}

/* Graphics view */
.view {
    flex: 1;
    display: flex;
    flex-direction: column;
    min-width: 0;
}

.canvas {
    position: relative;
    flex: 1;
    overflow: hidden;
    background: linear-gradient(#939da8, #afb8c0 25%, #c4c8d0 43%, #d3d6da 58%, #e7e9eb 75%, #f7f8f9 90%, #fff);
}

.model { width: 100%; }
.plate { stroke: #000; }
.holes { fill: #b6bfc8; stroke: #000; }
.holes.low { fill: #c8ccd2; }

.quick {
    position: absolute;
    top: 7px;
    left: 50%;
    width: 622px;
    margin-left: -312px;
    height: 43px;
    padding: 0 26px;
    display: flex;
    align-items: center;
    justify-content: space-between;
    border-radius: 22px;
    background: rgba(203, 207, 212, 0.600);
}

.quick svg {
    width: 18px;
    height: 18px;
    opacity: 0.550;
}

.quick .wide { width: 20px; }
.quick .strong { opacity: 0.750; }
.quick i { font-size: 11px; }

.quick hr {
    height: 43px;
    border: none;
    border-left: 1px solid #98a1aa;
}

.auto {
    display: flex;
    align-items: center;
    gap: 3px;
    font-size: 14px;
    color: #8c9299;
}

.on {
    display: flex;
    align-items: center;
    height: 43px;
    padding: 0 5px;
    background: #a0b4c5;
}

.side {
    position: absolute;
    top: 192px;
    right: 8px;
    display: grid;
    gap: 7px;
}

.side button {
    width: 44px;
    height: 44px;
    border: 1px solid rgba(130, 135, 140, 0.350);
    border-radius: 50%;
    background: rgba(240, 240, 240, 0.350) linear-gradient(to bottom right, transparent 49%, rgba(140, 140, 140, 0.350) 49%, rgba(140, 140, 140, 0.350) 51%, transparent 51%);
}

.side .plain { background: rgba(240, 240, 240, 0.350); }

.side svg {
    width: 42px;
    height: 42px;
    opacity: 0.450;
}

.axes {
    position: absolute;
    left: 40px;
    bottom: 42px;
    width: 60px;
    height: 64px;
    font-size: 12px;
    font-weight: bold;
}

.axes span { position: absolute; }
.axes .y { left: 11px; top: 2px; color: #0a0; }
.axes .x { left: 54px; top: 44px; color: red; }

.plane {
    position: absolute;
    left: 20px;
    bottom: 8px;
    font-size: 12px;
    color: #111;
}

.ruler {
    position: absolute;
    right: 23px;
    bottom: 10px;
    width: 97px;
    border: solid #000;
    border-width: 0 1px;
    font-size: 12px;
    font-weight: bold;
    line-height: 12px;
    text-align: center;
    color: #111;
}

.ruler span { display: block; }
.ruler span + span { border-top: 1px solid #000; }

.view-tabs {
    display: flex;
    align-items: center;
    height: 31px;
    border-top: 1px solid #c6c6c6;
    background: linear-gradient(#fff 3px, #c6c6c6 3px, #c6c6c6 4px, #f0f0f0 4px);
}

.view-tabs button {
    align-self: flex-start;
    height: 29px;
    padding: 2px 11px 0;
}

.view-tabs .active {
    width: 74px;
    padding: 2px 0 0;
    background: #fff;
    border: 1px solid #c6c6c6;
    border-top: none;
}

.arrows {
    width: 28px;
    height: 12px;
    margin-left: auto;
    margin-right: 4px;
}

/* Status bar */
.status {
    display: flex;
    align-items: center;
    justify-content: flex-end;
    height: 29px;
    flex: none;
    background: #2b579a;
    color: #e8eef7;
}

.status .key { width: 23px; }
.status .num { width: 93px; }
.status .num.y { width: 88px; }
.status .num.z { width: 62px; }
.status i { font-size: 11px; width: 12px; margin-top: -6px; color: #7d8797; }
.status .mode { width: 32px; margin-left: 5px; }
.status > button { width: 99px; text-align: left; }
.status > button:last-of-type { width: 84px; }

.shading {
    display: flex;
    margin-right: 2px;
    height: 29px;
}

.shading button {
    width: 32px;
    padding: 0 6px;
}

.shading .active { background: #3f78d4; }

/* Message box */
.message {
    position: absolute;
    top: 566px;
    left: 0;
    right: 0;
    margin: 0 auto;
    width: 220px;
    height: 202px;
    padding: 0;
    display: flex;
    flex-direction: column;
    border: 1px solid #777;
    background: #fff;
    color: #000;
    box-shadow: 0 6px 16px rgba(0, 0, 0, 0.450);
}

.caption {
    display: flex;
    align-items: center;
    justify-content: space-between;
    height: 30px;
    padding: 0 15px 0 4px;
}

.caption > svg { width: 18px; height: 16px; }
.caption button svg { width: 12px; height: 12px; }

.text {
    flex: 1;
    display: flex;
    align-items: center;
    gap: 10px;
    padding: 0 0 0 28px;
}

.text svg { width: 40px; height: 40px; }

.message form {
    display: flex;
    justify-content: flex-end;
    padding: 16px 23px;
    background: #f0f0f0;
}

.message form button {
    width: 98px;
    height: 31px;
    border: 2px solid #0078d7;
    background: #e1e1e1;
}
```
